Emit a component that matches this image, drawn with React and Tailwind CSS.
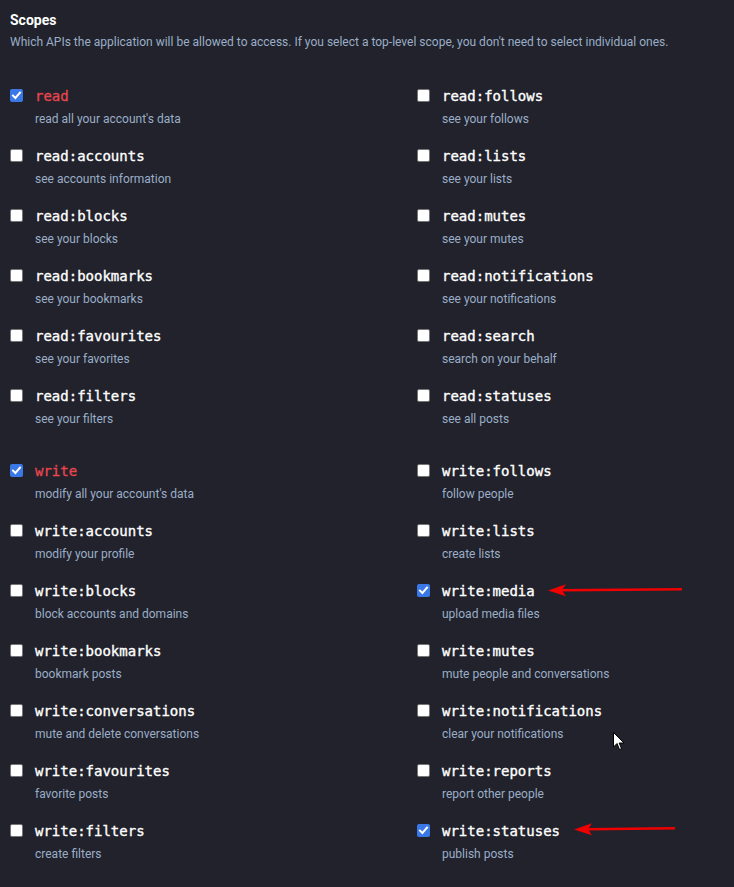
import React from "react";

const groups = [
  [
    ["read", "read all your account's data", true, true],
    ["read:follows", "see your follows"],
    ["read:accounts", "see accounts information"],
    ["read:lists", "see your lists"],
    ["read:blocks", "see your blocks"],
    ["read:mutes", "see your mutes"],
    ["read:bookmarks", "see your bookmarks"],
    ["read:notifications", "see your notifications"],
    ["read:favourites", "see your favorites"],
    ["read:search", "search on your behalf"],
    ["read:filters", "see your filters"],
    ["read:statuses", "see all posts"],
  ],
  [
    ["write", "modify all your account's data", true, true],
    ["write:follows", "follow people"],
    ["write:accounts", "modify your profile"],
    ["write:lists", "create lists"],
    ["write:blocks", "block accounts and domains"],
    ["write:media", "upload media files", true, false, "media"],
    ["write:bookmarks", "bookmark posts"],
    ["write:mutes", "mute people and conversations"],
    ["write:conversations", "mute and delete conversations"],
    ["write:notifications", "clear your notifications", false, false, "cursor"],
    ["write:favourites", "favorite posts"],
    ["write:reports", "report other people"],
    ["write:filters", "create filters"],
    ["write:statuses", "publish posts", true, false, "statuses"],
  ],
];

function Box({ checked }) {
  if (checked) {
    return (
      <span className="mt-[1px] flex h-[13px] w-[13px] shrink-0 items-center justify-center rounded-[2px] bg-[#3b78e7]">
        <svg width="11" height="11" viewBox="0 0 11 11">
          <path d="M2 5.6 L4.4 8 L9 2.6" fill="none" stroke="#fff" strokeWidth="2" strokeLinecap="square" />
        </svg>
      </span>
    );
  }
  return <span className="mt-[1px] block h-[13px] w-[13px] shrink-0 rounded-[2px] border border-[#767676] bg-white" />;
}

function Arrow({ width }) {
  return (
    <svg width={width} height="14" viewBox={`0 0 ${width} 14`} className="block">
      <path d={`M14 6 L${width - 1} 5 L${width - 1} 7.6 L14 8.6 Z`} fill="#f00000" />
      <path d="M0 7.5 L18 1.2 L14 7.3 L18 13.2 Z" fill="#f00000" />
    </svg>
  );
}

function Item({ name, desc, checked, top, extra }) {
  return (
    <div className="relative flex h-[60px] items-start gap-[12px]">
      <Box checked={checked} />
      <div className="flex flex-col">
        <span
          className={`text-[14px] leading-[16px] font-normal ${top ? "text-[#e8464f] [-webkit-text-stroke:0.3px_#e8464f]" : "text-white [-webkit-text-stroke:0.35px_white]"}`}
          style={{ fontFamily: '"DejaVu Sans Mono", monospace' }}
        >
          {name}
        </span>
        <span
          className="mt-[8px] text-[12px] leading-[14px] text-[#9baec8]"
          style={{ fontFamily: 'Roboto, "Noto Sans", sans-serif' }}
        >
          {desc}
        </span>
      </div>
      {extra === "media" && (
        <div className="absolute left-[131px] top-[0px]">
          <Arrow width={135} />
        </div>
      )}
      {extra === "statuses" && (
        <div className="absolute left-[157px] top-[-1px]">
          <Arrow width={102} />
        </div>
      )}
      {extra === "cursor" && (
        <div className="absolute left-[196px] top-[29px]">
          <svg width="12" height="19" viewBox="0 0 12 19">
            <path d="M0.5 0.5 L0.5 15 L4 11.5 L6.5 17.5 L8.5 16.6 L6.2 11 L11 11 Z" fill="#fff" stroke="#000" strokeWidth="1" />
          </svg>
        </div>
      )}
    </div>
  );
}

export default function App() {
  return (
    <div className="min-h-[887px] w-[734px] bg-[#21222b] pl-[10px] pt-[11px]" style={{ fontFamily: 'Roboto, "Noto Sans", sans-serif' }}>
      <h3 className="text-[14px] leading-[18px] font-bold text-white">Scopes</h3>
      <p className="mt-[6px] text-[12px] leading-[14px] text-[#9baec8]">
        Which APIs the application will be allowed to access. If you select a top-level scope, you don't need to select individual ones.
      </p>
      <div className="mt-[39px] flex flex-col gap-[15px]">
        {groups.map((g, gi) => (
          <div key={gi} className="grid grid-cols-[407px_1fr]">
            {g.map(([name, desc, checked, top, extra]) => (
              <Item key={name} name={name} desc={desc} checked={checked} top={top} extra={extra} />
            ))}
          </div>
        ))}
      </div>
    </div>
  );
}
